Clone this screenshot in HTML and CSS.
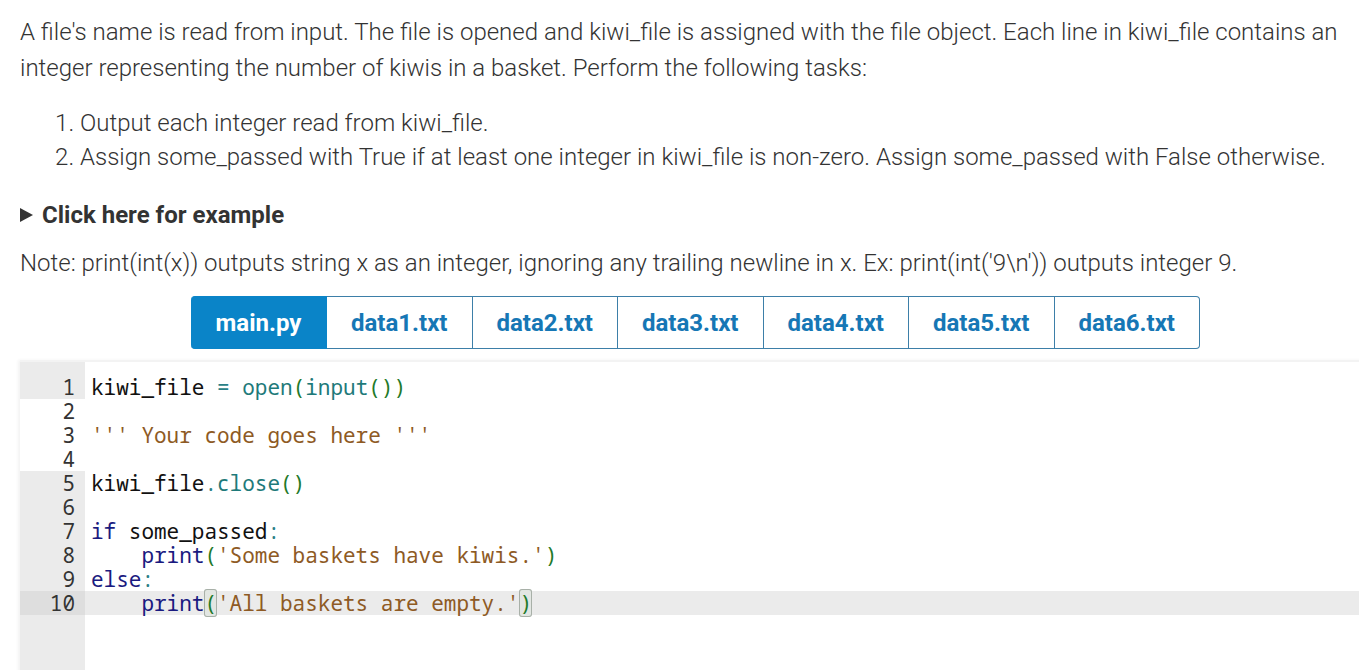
FILE: index.html
```html
<!DOCTYPE html>
<html lang="en">
<head>
<meta charset="utf-8">
<title>kiwi_file</title>
<link rel="stylesheet" href="styles.css">
</head>
<body>
<div class="page">
  <p class="intro">A file's name is read from input. The file is opened and kiwi_file is assigned with the file object. Each line in kiwi_file contains an integer representing the number of kiwis in a basket. Perform the following tasks:</p>
  <ol class="tasks">
    <li>Output each integer read from kiwi_file.</li>
    <li>Assign some_passed with True if at least one integer in kiwi_file is non-zero. Assign some_passed with False otherwise.</li>
  </ol>
  <details class="example">
    <summary><span class="tri"></span>Click here for example</summary>
  </details>
  <p class="note">Note: print(int(x)) outputs string x as an integer, ignoring any trailing newline in x. Ex: print(int('9\n')) outputs integer 9.</p>
  <div class="tabs">
    <div class="tab active">main.py</div>
    <div class="tab">data1.txt</div>
    <div class="tab">data2.txt</div>
    <div class="tab">data3.txt</div>
    <div class="tab">data4.txt</div>
    <div class="tab">data5.txt</div>
    <div class="tab">data6.txt</div>
  </div>
  <div class="editor">
    <div class="line ro pad"><span class="ln"></span><span class="code"></span></div>
    <div class="line ro"><span class="ln">1</span><span class="code"><span class="v">kiwi_file</span> <span class="op">=</span> <span class="bi">open</span><span class="br">(</span><span class="bi">input</span><span class="br">())</span></span></div>
    <div class="line"><span class="ln">2</span><span class="code"></span></div>
    <div class="line"><span class="ln">3</span><span class="code"><span class="s">''' Your code goes here '''</span></span></div>
    <div class="line"><span class="ln">4</span><span class="code"></span></div>
    <div class="line ro"><span class="ln">5</span><span class="code"><span class="v">kiwi_file</span><span class="op">.</span><span class="bi">close</span><span class="br">()</span></span></div>
    <div class="line ro"><span class="ln">6</span><span class="code"></span></div>
    <div class="line ro"><span class="ln">7</span><span class="code"><span class="kw">if</span> <span class="v">some_passed</span><span class="op">:</span></span></div>
    <div class="line ro"><span class="ln">8</span><span class="code">    <span class="kw">print</span><span class="br">(</span><span class="s">'Some baskets have kiwis.'</span><span class="br">)</span></span></div>
    <div class="line ro"><span class="ln">9</span><span class="code"><span class="kw">else</span><span class="op">:</span></span></div>
    <div class="line ro active"><span class="ln">10</span><span class="code">    <span class="kw">print</span><span class="br match">(</span><span class="s">'All baskets are empty.'</span><span class="br match">)</span></span></div>
    <div class="line ro filler"><span class="ln"></span><span class="code"></span></div>
  </div>
</div>
</body>
</html>
```

FILE: styles.css
```css
html, body {
  margin: 0;
  padding: 0;
  background: #ffffff;
  overflow: hidden;
}

.page {
  width: 1351px;
  padding: 14px 20px 0 20px;
  font-family: Roboto, "Liberation Sans", sans-serif;
  font-weight: 300;
  font-size: 24px;
  color: #333333;
}

.intro {
  margin: 0;
  line-height: 36px;
}

.tasks {
  margin: 20px 0 0 0;
  padding-left: 60px;
  line-height: 34px;
}

.example {
  margin-top: 24px;
}

.example summary {
  list-style: none;
  display: flex;
  align-items: center;
  font-weight: 700;
  line-height: 34px;
  color: #333333;
  cursor: pointer;
}

.example summary::-webkit-details-marker {
  display: none;
}

.tri {
  width: 0;
  height: 0;
  border-top: 7px solid transparent;
  border-bottom: 7px solid transparent;
  border-left: 13px solid #333333;
  margin-right: 9px;
}

.note {
  margin: 13px 0 0 0;
  line-height: 36px;
}

.tabs {
  margin-top: 15px;
  display: flex;
  justify-content: center;
}

.tab {
  height: 53px;
  box-sizing: border-box;
  width: 145.5px;
  display: flex;
  align-items: center;
  justify-content: center;
  border: 1px solid #3d7fa8;
  border-left: none;
  font-weight: 700;
  font-size: 24px;
  color: #1677b5;
  background: #ffffff;
}

.tab.active {
  width: 136px;
  background: #0a84c8;
  border-color: #0a84c8;
  color: #ffffff;
  border-radius: 4px 0 0 4px;
}

.tab:last-child {
  border-radius: 0 4px 4px 0;
}

.editor {
  margin-top: 11px;
  border-top: 2px solid #f3f3f3;
  box-shadow: -2px 0 3px rgba(0, 0, 0, 0.05);
  font-family: "Noto Sans Mono", "DejaVu Sans Mono", "Liberation Mono", monospace;
  font-weight: 400;
  font-size: 21px;
  color: #111111;
  margin-right: -40px;
}

.line {
  display: flex;
  min-height: 24px;
  line-height: 24px;
}

.line.pad {
  min-height: 13px;
  height: 13px;
}

.line.filler {
  height: 80px;
}

.ln {
  width: 65px;
  flex: none;
  box-sizing: border-box;
  padding-right: 10px;
  text-align: right;
  color: #333333;
  background: #ffffff;
}

.line.ro .ln {
  background: #ebebeb;
}

.code {
  flex: 1;
  padding-left: 6px;
  white-space: pre;
  position: relative;
  z-index: 1;
}

.line.active .code {
  background: #ebebeb;
}

.line.active .ln {
  background: #dedede;
}

.v { color: #111111; }
.op { color: #2a7f86; }
.bi { color: #1e7a7a; }
.br { color: #1f7a2a; }
.s { color: #8e5a24; }
.kw { color: #1a1a80; }

.match {
  background: #e2e6e2;
  box-shadow: inset 0 0 0 1px #a8b0a8;
  border-radius: 3px;
}
```
